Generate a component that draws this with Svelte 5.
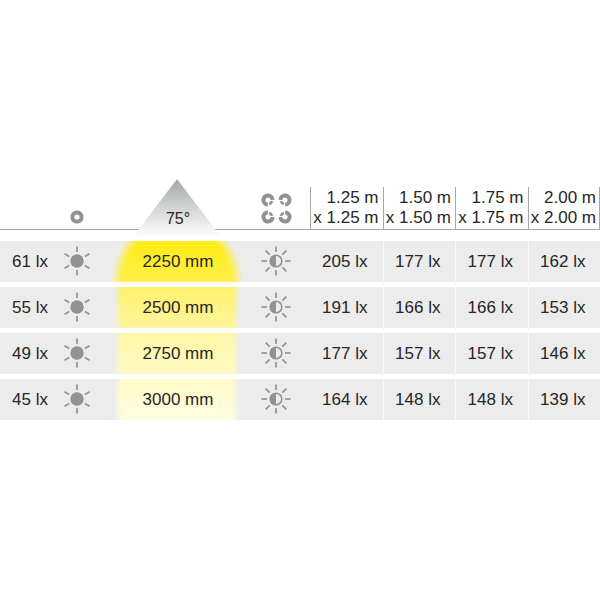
<script lang="ts">
  const areas = ['1.25 m', '1.50 m', '1.75 m', '2.00 m'];

  const rows = [
    { spot: 61, height: 2250, lux: [205, 177, 177, 162], from: '#ffec12', to: '#fff04c' },
    { spot: 55, height: 2500, lux: [191, 166, 166, 153], from: '#fff16c', to: '#fff59c' },
    { spot: 49, height: 2750, lux: [177, 157, 157, 146], from: '#fff7a6', to: '#fffac4' },
    { spot: 45, height: 3000, lux: [164, 148, 148, 139], from: '#fffbc8', to: '#fffde0' }
  ];

  const spotRays = [0, 60, 120, 180, 240, 300];
  const areaRays = [0, 45, 90, 135, 180, 225, 270, 315];

  // the two slits of each ring face the middle of the group
  const rings = [
    { x: 7, y: 7, turn: 0 },
    { x: 24, y: 7, turn: 90 },
    { x: 24, y: 24, turn: 180 },
    { x: 7, y: 24, turn: 270 }
  ];
</script>

<main>
  <table>
    <colgroup>
      <col class="col-spot" />
      <col class="col-sun" />
      <col class="col-height" />
      <col class="col-area" />
      {#each areas as area}
        <col />
      {/each}
    </colgroup>
    <thead>
      <tr>
        <th></th>
        <th class="sun">
          <svg class="ring" width="14" height="14" viewBox="0 0 14 14" role="img" aria-label="Spot">
            <circle cx="7" cy="7" r="4.6" fill="none" stroke="#929292" stroke-width="4" />
          </svg>
        </th>
        <th class="angle">
          <svg class="beam" width="88" height="58" viewBox="0 0 88 58" aria-hidden="true">
            <defs>
              <linearGradient id="beam" x1="0" y1="0" x2="0" y2="1">
                <stop offset="0" stop-color="#a3a6a8" />
                <stop offset="0.5" stop-color="#d2d4d5" />
                <stop offset="1" stop-color="#ffffff" />
              </linearGradient>
            </defs>
            <path d="M44 0 L88 58 H0 Z" fill="url(#beam)" />
          </svg>
          <span>75°</span>
        </th>
        <th>
          <svg class="rings" width="31" height="31" viewBox="0 0 31 31" role="img" aria-label="Area">
            {#each rings as ring}
              <g transform="translate({ring.x} {ring.y}) rotate({ring.turn})" fill="none" stroke="#929292">
                <path d="M-0.2 4.6 A4.6 4.6 0 1 1 4.6 -0.2" stroke-width="4" />
                <path d="M4 1.2 A4.2 4.2 0 0 1 1.2 4" stroke-width="2.8" />
              </g>
            {/each}
          </svg>
        </th>
        {#each areas as area}
          <th class="area"><div>{area}<br />x {area}</div></th>
        {/each}
      </tr>
    </thead>
    <tbody>
      {#each rows as row}
        <tr>
          <td class="spot">{row.spot} lx</td>
          <td class="sun">
            <svg width="30" height="30" viewBox="-15 -15 30 30" aria-hidden="true">
              <circle r="6.7" fill="#929292" />
              {#each spotRays as turn}
                <path d="M0 -9 V-14.4" stroke="#929292" stroke-width="1.7" transform="rotate({turn})" />
              {/each}
            </svg>
          </td>
          <td class="height" style="--from: {row.from}; --to: {row.to}">{row.height} mm</td>
          <td>
            <svg width="30" height="30" viewBox="-15 -15 30 30" aria-hidden="true">
              <circle r="5.8" fill="none" stroke="#929292" stroke-width="1.6" />
              <path d="M0 -6 A6 6 0 0 0 0 6 Z" fill="#929292" />
              {#each areaRays as turn}
                <path d="M0 -9 V-14.6" stroke="#929292" stroke-width="1.7" transform="rotate({turn})" />
              {/each}
            </svg>
          </td>
          {#each row.lux as lux}
            <td class="lux">{lux} lx</td>
          {/each}
        </tr>
      {/each}
    </tbody>
  </table>
</main>

<style>
  :global(body) {
    margin: 0;
    background: #fff;
  }

  main {
    display: flex;
    align-items: center;
    min-height: 100vh;
    font-family: 'Liberation Sans', Arial, sans-serif;
    font-size: 17px;
    line-height: 20px;
    color: #262626;
  }

  table {
    width: 100%;
    margin-bottom: 2px;
    table-layout: fixed;
    border-spacing: 0;
  }

  .col-spot {
    width: 55px;
  }

  .col-sun {
    width: 57px;
  }

  .col-height {
    width: 130px;
  }

  .col-area {
    width: 68px;
  }

  svg {
    display: inline-block;
    vertical-align: middle;
  }

  th {
    padding: 8px 0 0;
    border-bottom: 1px solid #a8a8a8;
    font-weight: normal;
    text-align: center;
    vertical-align: bottom;
  }

  .sun {
    padding-right: 13px;
  }

  .ring,
  .rings {
    display: block;
    margin: 0 auto 5px;
  }

  .angle {
    position: relative;
    font-size: 16px;
  }

  .angle span {
    position: relative;
    padding-left: 2px;
  }

  /* covers the header line and fades out in the gap below it */
  .beam {
    position: absolute;
    bottom: -8px;
    left: 50%;
    transform: translateX(-50%);
  }

  .area div {
    padding: 1px 4px 1px 0;
    border-left: 1px solid #a8a8a8;
    text-align: right;
    white-space: nowrap;
  }

  .area:last-child div {
    padding-right: 3px;
    border-right: 1px solid #a8a8a8;
  }

  tbody::before {
    content: '';
    display: block;
    height: 11px;
  }

  td {
    box-sizing: border-box;
    height: 46px;
    padding: 0;
    border-bottom: 5px solid #fff;
    background: #ececec;
    text-align: center;
    white-space: nowrap;
  }

  tr:last-child td {
    height: 41px;
    border-bottom: 0;
  }

  td.spot {
    padding: 2px 0 0 12px;
    text-align: left;
  }

  td.sun {
    padding-right: 13px;
  }

  td.height {
    padding: 2px 0 0 2px;
    background:
      linear-gradient(to right, #ececec 2px, transparent 10px calc(100% - 10px), #ececec calc(100% - 2px)),
      linear-gradient(var(--from), var(--to));
  }

  tr:first-child td.height {
    background:
      radial-gradient(66px 76px at 50% 48px, transparent 84%, #ececec 102%),
      linear-gradient(var(--from), var(--to));
  }

  td.lux {
    padding: 2px 3px 0 0;
  }

  .lux + .lux {
    border-left: 1px solid #f8f8f8;
  }
</style>
